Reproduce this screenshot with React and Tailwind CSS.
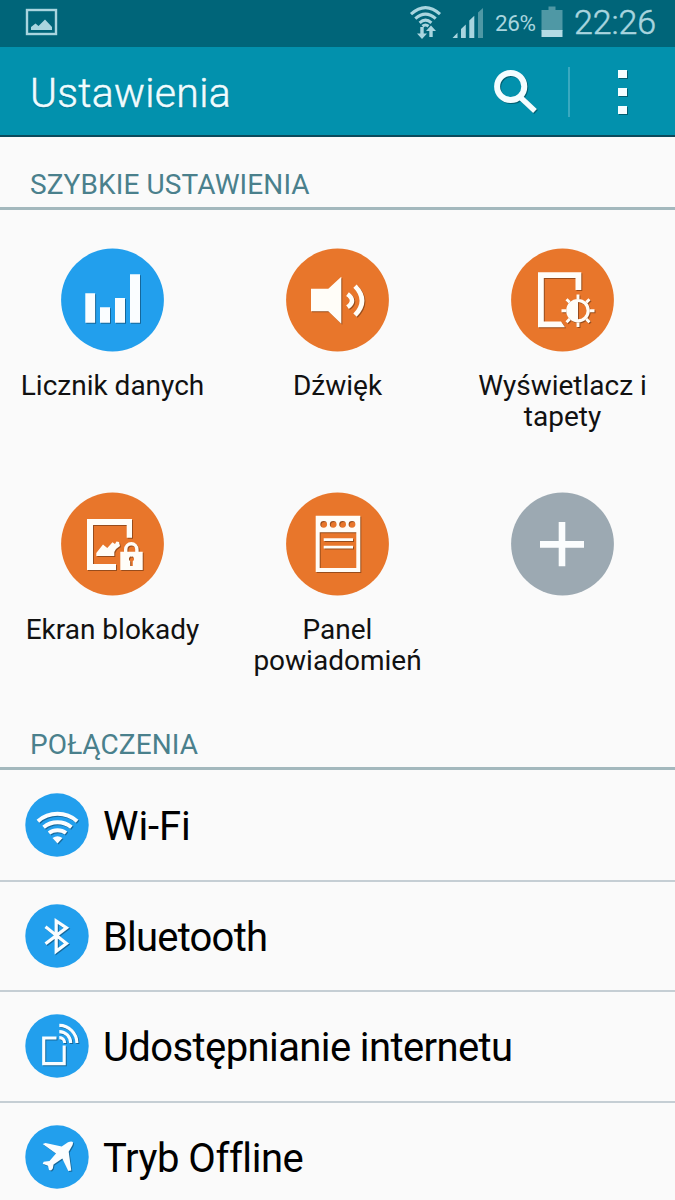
const shadow = '[filter:drop-shadow(1px_1px_0.5px_rgba(0,0,0,0.35))]';

const DataIcon = () => (
  <g fill="#fafdff">
    <path d="M24.8 45.3h9.8v29.4h-9.8zM39.5 59.3h10v15.4h-10zM54.5 50h10v24.7h-10zM69.5 26.3h10v48.4h-10z" />
  </g>
);

const SoundIcon = () => (
  <g fill="none" stroke="#fffdf8" strokeWidth="4.6">
    <path fill="#fffdf8" stroke="none" d="M25.5 40.7H42.8L55.8 28.7V75.7L42.8 63.3H25.5Z" />
    <path d="M62 46.2Q71 52.7 62 59.2M69.5 38.2Q83.5 52.7 69.5 67.2" />
  </g>
);

const DisplayIcon = () => (
  <g fill="#fffdf8">
    <path d="M27.5 24.3H70.8V42H65V30H33.3V73.6H50.5L54.5 79.3H27.5Z" />
    <circle cx="67.5" cy="62.7" r="10.2" fill="none" stroke="#fffdf8" strokeWidth="3.2" />
    <path d="M67.5 52A10.7 10.7 0 0 0 67.5 73.4Z" />
    <path
      fill="none"
      stroke="#fffdf8"
      strokeWidth="2.9"
      d="M67.5 51V46.5M67.5 74.4V79M55.8 62.7H51M79.2 62.7H84M59.2 54.4L56 51.2M75.8 54.4L79 51.2M59.2 71L56 74.2M75.8 71L79 74.2"
    />
  </g>
);

const LockIcon = () => (
  <g fill="#fffdf8">
    <path d="M26.5 27H71.5V45.7H66.2V33H32.5V72H55.5V78H26.5Z" />
    <path d="M35.8 64V61L42.5 52.5L46.8 56L52 50.2L54.5 52L56 49.6L58.5 50L59.5 54L55.5 57L53.8 60V64Z" />
    <path fillRule="evenodd" d="M59.8 59.7H82.2V78H59.8ZM71 64.3a2.7 2.7 0 0 0-1.3 5V74h2.6V69.3a2.7 2.7 0 0 0-1.3-5Z" />
    <path fill="none" stroke="#fffdf8" strokeWidth="3.4" d="M65.2 61V57.6A5.6 5.8 0 0 1 76.4 57.6V61" />
  </g>
);

const PanelIcon = () => (
  <g fill="#fffdf8">
    <path
      fillRule="evenodd"
      d="M30.2 23.7H74.8V80H30.2ZM34.2 40.3V76H70.8V40.3ZM34.8 32.3a3.4 3.4 0 1 0 6.8 0a3.4 3.4 0 1 0-6.8 0ZM44.3 32.3a3.4 3.4 0 1 0 6.8 0a3.4 3.4 0 1 0-6.8 0ZM53.7 32.3a3.4 3.4 0 1 0 6.8 0a3.4 3.4 0 1 0-6.8 0ZM63.1 32.3a3.4 3.4 0 1 0 6.8 0a3.4 3.4 0 1 0-6.8 0Z"
    />
    <path d="M38.2 46.3H67.5V49H38.2ZM38.2 53.8H67.5V56.6H38.2Z" />
  </g>
);

const PlusIcon = () => <path fill="#fbfdfe" d="M48.2 30h6.6V49H73.5v6.8H54.8V74.3H48.2V55.8H29.5V49H48.2Z" />;

const WifiIcon = () => (
  <g fill="none" stroke="#fafdff" strokeWidth="4">
    <path d="M12.9 28.2A29.7 29.7 0 0 1 52.1 28.2M18.6 34.2A21.8 21.8 0 0 1 46.4 34.2M24 40A14.2 14.2 0 0 1 41 40" />
    <path fill="#fafdff" stroke="none" d="M27.5 45Q32.5 41.5 37.5 45L32.5 50.5Z" />
  </g>
);

const BluetoothIcon = () => (
  <path fill="none" stroke="#fafdff" strokeWidth="3.2" d="M20.5 22.8L41.5 39.5L31.2 47.3V17L41.5 23.8L20.5 39.8" />
);

const TetherIcon = () => (
  <g fill="none" stroke="#fafdff" strokeWidth="3.1">
    <path d="M31.5 24H18.7V49.6H39.2V31.5" />
    <path d="M34.3 11.4A17.6 17.6 0 0 1 51.9 29M34.3 17.6A11.4 11.4 0 0 1 45.7 29M34.3 23.6A5.4 5.4 0 0 1 39.7 29" />
  </g>
);

const PlaneIcon = () => (
  <path
    fill="#fafdff"
    d="M17.7 19L20.5 18L36.7 21.5L43 17.3Q46.5 16 47.8 17Q48.3 18.5 47.3 20.5L43.7 26.7L46.3 45.5L43.3 46L37.3 33.5L28.5 39.5L27.8 43.5L26 45.4L24 45L23 40.8L17.7 38.7L18.7 36.7L24.5 36L31 28.5Z"
  />
);

const tiles = [
  { label: ['Licznik danych'], color: '#229fed', Icon: DataIcon },
  { label: ['Dźwięk'], color: '#e8762b', Icon: SoundIcon },
  { label: ['Wyświetlacz i', 'tapety'], color: '#e8762b', Icon: DisplayIcon },
  { label: ['Ekran blokady'], color: '#e8762b', Icon: LockIcon },
  { label: ['Panel', 'powiadomień'], color: '#e8762b', Icon: PanelIcon },
  { label: [], color: '#9ca9b2', Icon: PlusIcon, flat: true },
];

const rows = [
  { label: 'Wi-Fi', Icon: WifiIcon, tracking: 'tracking-[-0.1px]' },
  { label: 'Bluetooth', Icon: BluetoothIcon, tracking: 'tracking-[-0.8px]' },
  { label: 'Udostępnianie internetu', Icon: TetherIcon, tracking: 'tracking-[-0.6px]' },
  { label: 'Tryb Offline', Icon: PlaneIcon, tracking: 'tracking-[-0.45px]' },
];

function Tile({ label, color, Icon, flat }) {
  return (
    <div className="flex h-[244px] flex-col items-center">
      <svg className="mr-px" width="104" height="104" viewBox="-0.5 0 104 104">
        <circle cx="52" cy="52" r="51.4" fill={color} />
        <g className={flat ? '' : shadow}>
          <Icon />
        </g>
      </svg>
      <div className="mt-[18px] text-center text-[28px] leading-[31px] whitespace-nowrap text-[#111]">
        {label.map((line) => (
          <div key={line}>{line}</div>
        ))}
      </div>
    </div>
  );
}

function SectionTitle({ children }) {
  return (
    <h2 className="mb-px flex h-[73px] items-end border-b-3 border-[#a3b8bd] pb-[6px] pl-[30px] text-[28px] leading-[32px] tracking-[0.1px] whitespace-nowrap text-[#4a808c]">
      {children}
    </h2>
  );
}

function StatusBar() {
  return (
    <div className="flex h-[47px] items-start bg-[#006579] text-[#a9d5df]">
      <svg className="mt-[8px] ml-[25px]" width="33" height="28" viewBox="0 0 33 28">
        <rect x="2" y="2" width="29" height="24" fill="none" stroke="#a9d5df" strokeWidth="2.4" />
        <path fill="#a9d5df" d="M6 22V19L10.5 15.5L13.5 18L20 11.5L27 19V22Z" />
      </svg>
      <svg className="mt-[5px] ml-[351px]" width="33" height="35" viewBox="0 0 33 35">
        <g fill="none" stroke="#a9d5df" strokeWidth="3.1">
          <path d="M2 9.2Q16.5-3.8 31 9.2M6.3 13.7Q16.5 4.5 26.7 13.7M10.6 17.8Q16.5 12.6 22.4 17.8" />
          <path d="M13.5 21.2Q16.5 18.8 19.5 21.2" />
        </g>
        <path fill="#a9d5df" d="M11.3 22H14.7V28.5H18L13 34L8 28.5H11.3ZM20.3 32V26H17L22 20.5L27 26H23.7V32Z" />
      </svg>
      <svg className="mt-[7px] ml-[9px]" width="33" height="32" viewBox="0 0 33 32">
        <path fill="#a9d5df" d="M1.5 31L6.5 25.7V31ZM10 31V22L14.8 17.5V31ZM18.3 31V13.5L23.3 8.8V31Z" />
        <path fill="#4f98a5" d="M27 31V5.5L32 1V31Z" />
      </svg>
      <span className="mt-[10px] ml-[11px] w-[46px] text-[22.5px] leading-[26px] tracking-[-0.4px]">26%</span>
      <svg className="mt-[6px]" width="22" height="31" viewBox="0 0 22 31">
        <path fill="#4f98a5" d="M0.5 4H7.5V0.5H14.5V4H21.5V25H0.5Z" />
        <path fill="#b4dbe4" d="M0.5 24H21.5V31H0.5Z" />
      </svg>
      <span className="mt-[2px] ml-[11px] text-[34px] leading-[40px] font-light tracking-[-0.1px] [-webkit-text-stroke:0.5px_#a9d5df]">
        22:26
      </span>
    </div>
  );
}

function Header() {
  return (
    <header className="flex h-[90px] items-start border-b-2 border-[#0b4a5c] bg-[#0291ad]">
      <h1 className="mt-[22px] ml-[30px] w-[463px] text-[41px] leading-[48px] font-light tracking-[0.3px] text-[#effcff] [-webkit-text-stroke:0.5px_#effcff] [text-shadow:0_1px_1px_rgba(0,50,70,0.4)]">
        Ustawienia
      </h1>
      <svg className={`mt-[22px] ${shadow}`} width="46" height="46" viewBox="0 0 46 46">
        <circle cx="17.7" cy="17.5" r="13.6" fill="none" stroke="#f4fdff" strokeWidth="6" />
        <path stroke="#f4fdff" strokeWidth="5.4" d="M26.5 27.5L42 42" />
      </svg>
      <div className="mt-[20px] ml-[29px] h-[50px] w-[2px] bg-[#39a9c0]" />
      <div className={`mt-[23px] ml-[48px] flex flex-col gap-[10px] ${shadow}`}>
        <div className="h-2 w-[9px] bg-[#f4fdff]" />
        <div className="h-2 w-[9px] bg-[#f4fdff]" />
        <div className="h-2 w-[9px] bg-[#f4fdff]" />
      </div>
    </header>
  );
}

export default function App() {
  return (
    <div className="h-[1200px] w-[675px] overflow-hidden bg-[#fafafa] font-['Roboto',sans-serif]">
      <StatusBar />
      <Header />
      <SectionTitle>SZYBKIE USTAWIENIA</SectionTitle>
      <div className="grid h-[486px] grid-cols-3 pt-[37px]">
        {tiles.map((tile, i) => (
          <Tile key={i} {...tile} />
        ))}
      </div>
      <SectionTitle>POŁĄCZENIA</SectionTitle>
      <ul>
        {rows.map(({ label, Icon, tracking }) => (
          <li key={label} className="flex h-[110.5px] items-center border-b-2 border-[#c5ced4] pl-[25px]">
            <svg width="64" height="64" viewBox="0 0 64 64">
              <circle cx="32" cy="32" r="31.7" fill="#229fed" />
              <g className={shadow}>
                <Icon />
              </g>
            </svg>
            <span
              className={`ml-[14px] pt-[4px] text-[40px] whitespace-nowrap text-black [font-variant-ligatures:none] ${tracking}`}
            >
              {label}
            </span>
          </li>
        ))}
      </ul>
    </div>
  );
}
